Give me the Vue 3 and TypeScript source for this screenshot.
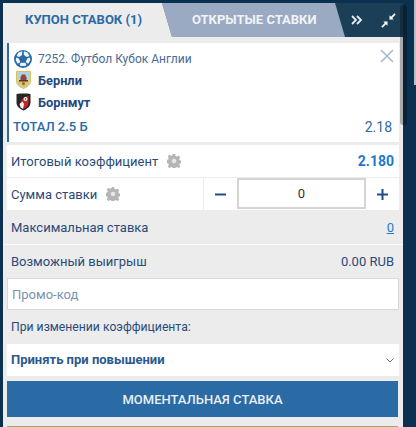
<script setup lang="ts">
import { ref } from "vue";

const promo = ref("");
const amount = ref("0");
</script>

<template>
  <div class="page">
    <div class="panel">
      <div class="tabs">
        <div class="tab-open">ОТКРЫТЫЕ СТАВКИ</div>
        <div class="tab-active">КУПОН СТАВОК (1)</div>
        <div class="tab-tools">
          <svg class="tool-arrows" width="12" height="10" viewBox="0 0 12 10">
            <path d="M1 1l4 4-4 4M6 1l4 4-4 4" fill="none" stroke="#e8edf2" stroke-width="1.800" />
          </svg>
          <svg class="tool-collapse" width="15" height="15" viewBox="0 0 15 15">
            <path d="M8.500 6.500V2.300L10 3.800 13.500 0.300 14.700 1.500 11.200 5l1.500 1.500z" fill="#fff" />
            <path d="M6.500 8.500v4.200L5 11.200 1.500 14.700 0.300 13.500 3.800 10 2.300 8.500z" fill="#fff" />
          </svg>
        </div>
      </div>

      <div class="body">
        <div class="card">
          <svg class="close" width="14" height="14" viewBox="0 0 14 14">
            <path d="M1 1l12 12M13 1L1 13" stroke="#a9b8cf" stroke-width="1.600" fill="none" />
          </svg>
          <div class="league">
            <svg class="ball" width="18" height="18" viewBox="0 0 18 18">
              <circle cx="9" cy="9" r="9" fill="#2a6aa5" />
              <path d="M9.800 1.300l3.700 1.300 2 3.400-2.700 1-2.900-2zM8.200 1.300L4.500 2.600l-2 3.400 2.700 1 2.900-2z" fill="#eef4fa" />
              <path d="M15.800 7.500l.5 2.500-1.800 3.500-1.800-.5-.9-1.200 1.400-3.400zM2.200 7.500L1.700 10l1.800 3.500 1.800-.5.900-1.200-1.400-3.400z" fill="#eef4fa" />
              <path d="M7 12.800h4l1.400 1.200-.9 2h-5l-.9-2z" fill="#eef4fa" />
            </svg>
            <span>7252. Футбол Кубок Англии</span>
          </div>
          <div class="team">
            <svg class="crest" width="15" height="18" viewBox="0 0 15 18">
              <path d="M0.500 0.500h14v10c0 3.500-3.500 5.500-7 7-3.500-1.500-7-3.500-7-7z" fill="#b7d0e2" stroke="#d9c15a" />
              <path d="M2 10h11v1c0 2.500-3 4.200-5.500 5.300C5 15.200 2 13.500 2 11z" fill="#e3c45a" />
              <path d="M5.500 3.500h4V5l1 1v3h-6V6l1-1z" fill="#8a4a3a" />
              <path d="M3 9h9v1.500H3z" fill="#5d3128" />
              <circle cx="7.500" cy="12.500" r="1.500" fill="#8f6a2a" />
            </svg>
            <span>Бернли</span>
          </div>
          <div class="team">
            <svg class="crest" width="15" height="18" viewBox="0 0 15 18">
              <path d="M0.500 1l3.500-.5h7L14.500 1v8.500c0 4-3.500 6.500-7 8-3.500-1.500-7-4-7-8z" fill="#262626" />
              <path d="M5 7.500C7 5.500 9 3 12.500 3v7c0 2.500-2.500 4.800-5 6-1.500-.8-2.700-1.700-3.500-3z" fill="#c9232b" />
              <path d="M3.500 11l3-2.500 1.500 2.500-1 5-2.500-1.800z" fill="#f2f2f2" />
              <circle cx="9.500" cy="6" r="2" fill="#f2f2f2" />
              <circle cx="9.500" cy="6" r=".7" fill="#262626" />
            </svg>
            <span>Борнмут</span>
          </div>
          <div class="market">
            <span class="market-name">ТОТАЛ 2.5 Б</span>
            <span>2.18</span>
          </div>
        </div>

        <div class="row row-white total">
          <span class="label">Итоговый коэффициент
            <svg class="gear" width="14" height="14" viewBox="0 0 14 14">
              <path d="M5.800 0h2.400l.4 2 1.300.6 1.700-1.100 1.700 1.700-1.100 1.700.6 1.300 2 .4v2.400l-2 .4-.6 1.300 1.100 1.700-1.700 1.700-1.700-1.100-1.300.6-.4 2H5.800l-.4-2-1.300-.6-1.700 1.100-1.700-1.700 1.100-1.700-.6-1.300-2-.4V5.800l2-.4.6-1.300-1.100-1.700 1.700-1.700 1.700 1.100 1.300-.6z" fill="#b5b5b5" />
              <circle cx="7" cy="7" r="2.300" fill="#e6e6e6" />
            </svg>
          </span>
          <span class="coef">2.180</span>
        </div>

        <div class="stake">
          <span class="label stake-label">Сумма ставки
            <svg class="gear" width="14" height="14" viewBox="0 0 14 14">
              <path d="M5.800 0h2.400l.4 2 1.300.6 1.700-1.100 1.700 1.700-1.100 1.700.6 1.300 2 .4v2.400l-2 .4-.6 1.300 1.100 1.700-1.700 1.700-1.700-1.100-1.300.6-.4 2H5.800l-.4-2-1.300-.6-1.700 1.100-1.700-1.700 1.100-1.700-.6-1.300-2-.4V5.800l2-.4.6-1.300-1.100-1.700 1.700-1.700 1.700 1.100 1.300-.6z" fill="#b5b5b5" />
              <circle cx="7" cy="7" r="2.300" fill="#e6e6e6" />
            </svg>
          </span>
          <div class="stepper">
            <button class="step" type="button">
              <svg width="11" height="11" viewBox="0 0 11 11"><path d="M0 4.500h11v2H0z" fill="#1d4f86" /></svg>
            </button>
            <input v-model="amount" class="amount" type="text" />
            <button class="step" type="button">
              <svg width="11" height="11" viewBox="0 0 11 11"><path d="M0 4.500h11v2H0zM4.500 0h2v11h-2z" fill="#1d4f86" /></svg>
            </button>
          </div>
        </div>
      </div>

      <div class="row row-grey wide">
        <span class="label">Максимальная ставка</span>
        <a class="max-link">0</a>
      </div>
      <div class="row row-grey wide">
        <span class="label">Возможный выигрыш</span>
        <span class="win">0.00 RUB</span>
      </div>

      <div class="bottom">
        <input v-model="promo" class="promo" type="text" placeholder="Промо-код" />
        <div class="change-label">При изменении коэффициента:</div>
        <div class="select">
          <span>Принять при повышении</span>
          <svg width="8" height="5" viewBox="0 0 8 5">
            <path d="M0.500 0.500L4 4l3.500-3.500" fill="none" stroke="#5b6f88" stroke-width="1" />
          </svg>
        </div>
        <button class="instant" type="button">МОМЕНТАЛЬНАЯ СТАВКА</button>
        <div class="next-btn"></div>
      </div>
    </div>
    <div class="scroll-thumb"></div>
    <div class="page-scroll"></div>
  </div>
</template>

<style>
html,
body {
  margin: 0;
  background: #0c3150;
}
</style>

<style scoped>
.page {
  position: relative;
  width: 416px;
  height: 427px;
  overflow: hidden;
  background: #0c3150;
  font-family: Roboto, "Liberation Sans", sans-serif;
  font-size: 13px;
  color: #2a4a78;
}

.panel {
  position: relative;
  width: 400px;
  height: 424px;
  margin: 3px 0 0 3px;
  background: #ececec;
  overflow: hidden;
}

.tabs {
  position: relative;
  display: flex;
  height: 34px;
  background: #1c3f58;
}

.tab-active,
.tab-open {
  position: absolute;
  top: 0;
  height: 34px;
  line-height: 34px;
  font-size: 13px;
  font-weight: 700;
}

.tab-active {
  left: 0;
  width: 169px;
  padding-left: 22px;
  box-sizing: border-box;
  background: #ececec;
  color: #2a6aa5;
  clip-path: polygon(0 0, 159px 0, 169px 100%, 0 100%);
}

.tab-open {
  left: 159px;
  width: 183px;
  padding-left: 30px;
  box-sizing: border-box;
  background: #9aaac3;
  color: #f1f3f7;
  clip-path: polygon(0 0, 173px 0, 183px 100%, 10px 100%);
}

.tab-tools {
  position: absolute;
  right: 7px;
  top: 0;
  height: 34px;
  display: flex;
  align-items: center;
  gap: 18px;
}

.body {
  padding: 6px 4px 0;
}

.card {
  position: relative;
  height: 99px;
  box-sizing: border-box;
  padding: 6px 7px 0 4px;
  background: #fff;
  border-left: 2px solid #2a6aa5;
  margin-bottom: 3px;
}

.close {
  position: absolute;
  top: 6px;
  right: 5px;
}

.league {
  display: flex;
  align-items: center;
  gap: 6px;
  height: 20px;
  font-size: 12px;
  color: #4a6b96;
}

.ball {
  margin-left: 1px;
}

.team {
  display: flex;
  align-items: center;
  gap: 7px;
  height: 22px;
  padding-left: 3px;
  font-weight: 700;
  font-size: 12.800px;
  color: #234a80;
}

.market {
  display: flex;
  justify-content: space-between;
  margin-top: 4px;
  font-size: 14px;
  line-height: 20px;
  color: #2a6aa5;
}

.market-name {
  font-size: 13px;
  font-weight: 500;
}

.row {
  display: flex;
  align-items: center;
  justify-content: space-between;
  height: 32px;
  padding: 0 5px 0 4px;
}

.row-white {
  background: #fff;
}

.total {
  border-bottom: 1px solid #ececec;
  height: 33px;
  box-sizing: border-box;
}

.label {
  display: inline-flex;
  align-items: center;
  gap: 9px;
  font-size: 13px;
  color: #2a4a78;
}

.gear {
  flex: none;
}

.coef {
  font-size: 14px;
  font-weight: 700;
  color: #1f78cf;
}

.stake {
  display: flex;
  height: 32px;
  background: #fff;
}

.stake-label {
  width: 197px;
  padding-left: 4px;
  box-sizing: border-box;
  border-right: 1px solid #ececec;
}

.stepper {
  flex: 1;
  display: flex;
  align-items: stretch;
}

.step {
  width: 33px;
  padding: 0;
  border: 0;
  background: #fff;
  display: flex;
  align-items: center;
  justify-content: center;
}

.amount {
  width: 129px;
  height: 31px;
  box-sizing: border-box;
  border: 2px solid #d4d4d4;
  background: #fff;
  text-align: center;
  font-family: inherit;
  font-size: 13px;
  color: #333;
  outline: none;
}

.wide {
  padding: 0 9px 0 8px;
  height: 32px;
  margin-top: 1px;
  background: #ececec;
}

.max-link {
  font-size: 13px;
  color: #2a7ac8;
  text-decoration: underline;
}

.win {
  font-size: 13px;
  color: #2a4a78;
}

.wide + .wide {
  border-top: 1px solid #fafafa;
}

.bottom {
  padding: 1px 4px 0;
}

.promo {
  display: block;
  width: 392px;
  height: 32px;
  box-sizing: border-box;
  padding: 0 4px;
  border: 1px solid #d8d8d8;
  background: #fff;
  font-family: inherit;
  font-size: 13px;
  outline: none;
}

.promo::placeholder {
  color: #7a92b4;
  opacity: 1;
}

.change-label {
  height: 34px;
  padding-left: 4px;
  line-height: 35px;
  font-size: 12.200px;
  color: #2a4a78;
}

.select {
  display: flex;
  align-items: center;
  justify-content: space-between;
  height: 32px;
  padding: 0 5px 0 4px;
  background: #fff;
  font-weight: 700;
  color: #2a5a90;
}

.select span {
  position: relative;
  top: -1px;
}

.instant {
  display: block;
  width: 391px;
  height: 36px;
  margin-top: 5px;
  border: 0;
  padding: 0;
  background: #2a6aa5;
  color: #e9eff6;
  font-family: inherit;
  font-size: 13px;
  font-weight: 500;
}

.next-btn {
  width: 391px;
  height: 2px;
  margin-top: 9px;
  background: #93ad5c;
}

.scroll-thumb {
  position: absolute;
  top: 5px;
  left: 400px;
  width: 7px;
  height: 120px;
  border-radius: 3px;
  background: rgba(0, 0, 0, 0.28);
}

.page-scroll {
  position: absolute;
  top: 0;
  right: 0;
  width: 2px;
  height: 85px;
  background: #b8c0c8;
}
</style>
